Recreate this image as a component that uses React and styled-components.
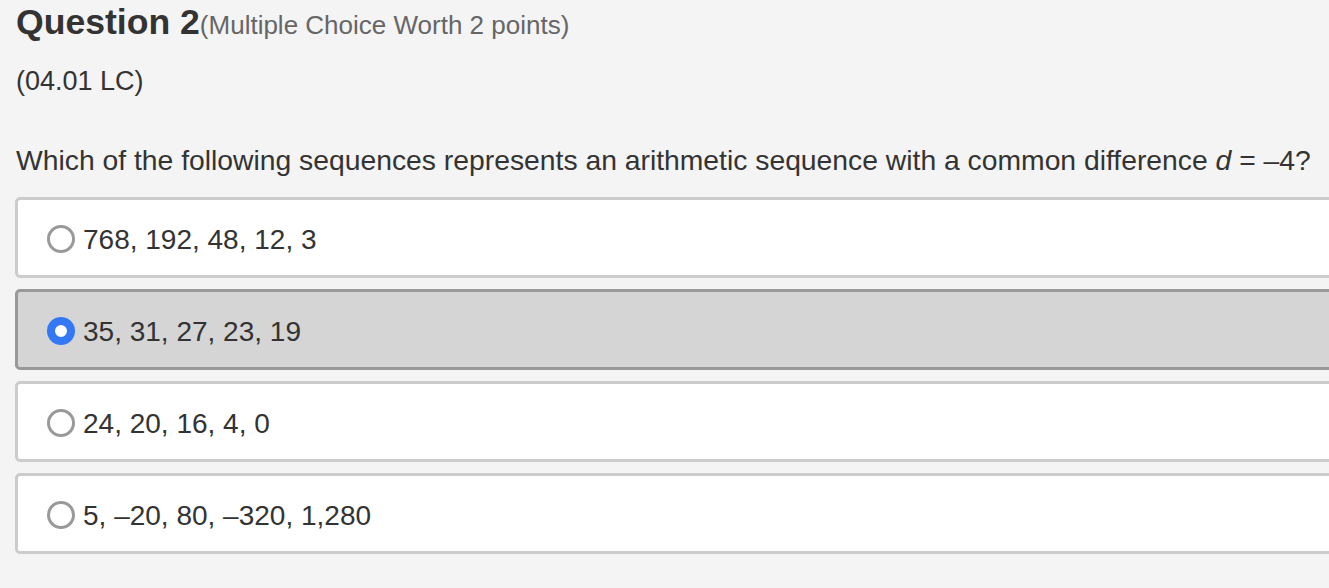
import React from "react";
import styled, { createGlobalStyle } from "styled-components";

const Global = createGlobalStyle`
  html, body { margin: 0; padding: 0; background: #f4f4f4; overflow: hidden; }
  body { font-family: "Liberation Sans", Arial, Helvetica, sans-serif; color: #333; }
`;

const Page = styled.div`
  padding: 2px 0 0 16px;
  width: 1329px;
  height: 588px;
  box-sizing: border-box;
  overflow: hidden;
`;

const Title = styled.h1`
  margin: 0;
  font-size: 35.6px;
  line-height: 40px;
  font-weight: 700;
  color: #333;
  display: flex;
  align-items: baseline;
`;

const Worth = styled.span`
  font-size: 26px;
  font-weight: 400;
  color: #666;
`;

const Code = styled.p`
  margin: 20px 0 0;
  font-size: 27px;
  line-height: 32px;
  color: #333;
`;

const Prompt = styled.p`
  margin: 47px 0 0;
  font-size: 28.3px;
  line-height: 32px;
  color: #333;
`;

const Options = styled.div`
  margin: 21px -40px 0 -1px;
  display: flex;
  flex-direction: column;
  gap: 11px;
`;

const Option = styled.label`
  display: flex;
  align-items: center;
  gap: 8px;
  height: 81px;
  box-sizing: border-box;
  padding: 0 0 0 29px;
  border: 3px solid ${(p) => (p.$selected ? "#999" : "#ccc")};
  border-radius: 5px;
  background: ${(p) => (p.$selected ? "#d5d5d5" : "#fff")};
  font-size: 28px;
  color: #333;
`;

const Radio = styled.span`
  width: 28px;
  height: 28px;
  box-sizing: border-box;
  border-radius: 50%;
  flex: none;
  background: #fff;
  border: ${(p) => (p.$checked ? "8px solid #3478f6" : "3px solid #999")};
  margin-top: 2px;
`;

const Text = styled.span`
  line-height: 32px;
  margin-top: 4px;
`;

const options = [
  "768, 192, 48, 12, 3",
  "35, 31, 27, 23, 19",
  "24, 20, 16, 4, 0",
  "5, \u201320, 80, \u2013320, 1,280",
];

export default function App() {
  return (
    <>
      <Global />
      <Page>
        <Title>
          Question 2<Worth>(Multiple Choice Worth 2 points)</Worth>
        </Title>
        <Code>(04.01 LC)</Code>
        <Prompt>
          Which of the following sequences represents an arithmetic sequence
          with a common difference <i>d</i> = {"\u2013"}4?
        </Prompt>
        <Options>
          {options.map((o, i) => (
            <Option key={i} $selected={i === 1}>
              <Radio $checked={i === 1} />
              <Text>{o}</Text>
            </Option>
          ))}
        </Options>
      </Page>
    </>
  );
}
